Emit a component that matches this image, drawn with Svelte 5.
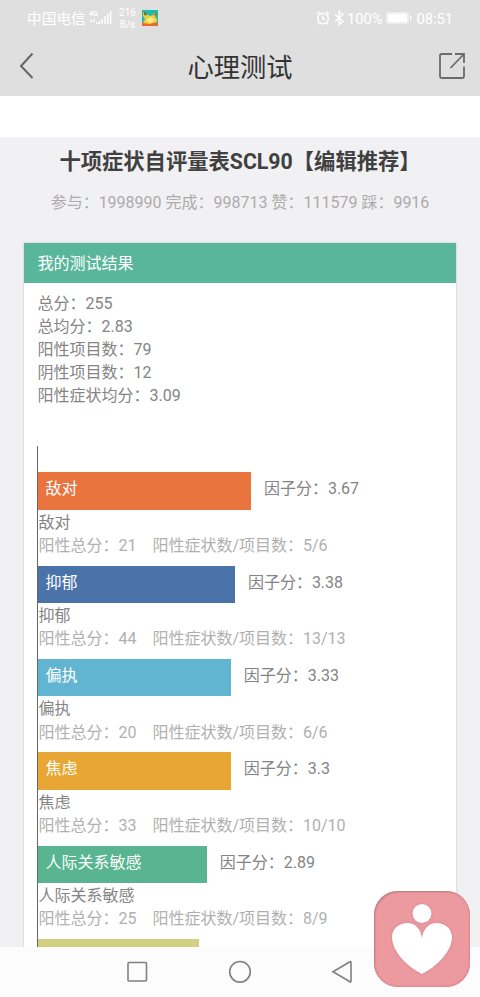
<script lang="ts">
  // Numbers shown under the title
  const stats = [
    { label: "参与", value: 1998990 },
    { label: "完成", value: 998713 },
    { label: "赞", value: 111579 },
    { label: "踩", value: 9916 },
  ];

  // Overall result
  const summary = [
    { label: "总分", value: "255" },
    { label: "总均分", value: "2.83" },
    { label: "阳性项目数", value: "79" },
    { label: "阴性项目数", value: "12" },
    { label: "阳性症状均分", value: "3.09" },
  ];

  // One bar for each factor, width in percent of the chart
  const factors = [
    { name: "敌对", score: "3.67", total: 21, items: "5/6", width: 53, color: "#e9743e" },
    { name: "抑郁", score: "3.38", total: 44, items: "13/13", width: 49, color: "#4a73aa" },
    { name: "偏执", score: "3.33", total: 20, items: "6/6", width: 48, color: "#62b5d1" },
    { name: "焦虑", score: "3.3", total: 33, items: "10/10", width: 48, color: "#e8a735" },
    { name: "人际关系敏感", score: "2.89", total: 25, items: "8/9", width: 42, color: "#58b491" },
  ];

  // The bar that is scrolled halfway under the navigation keys
  const nextBar = { width: 40, color: "#d2d182" };

  const statsLine = stats.map((s) => `${s.label}：${s.value}`).join(" ");
</script>

<div class="phone">
  <header>
    <div class="status">
      <span class="carrier">中国电信</span>
      <svg class="signal" width="23" height="16" viewBox="0 0 23 16" fill="#fff">
        <text x="0" y="6" font-size="7" font-weight="bold">4G</text>
        <path d="M1 11l2-2v4zM4 9.5h2v2H4zM7 12h1.5v2H7zM9.6 11h1.6v3H9.6zM12.4 9H14v5h-1.600zM15.200 6.500h1.600V14h-1.600zM18 4h1.600v10H18zM20.800 1h1.600v13h-1.600z" />
      </svg>
      <span class="speed">216<br />B/s</span>
      <svg class="app" width="16" height="16" viewBox="0 0 16 16">
        <rect width="16" height="16" fill="#20b9ad" />
        <path d="M0 12.500Q8 10 16 13v3H0z" fill="#e56b32" />
        <path d="M1 1l4 3.500 3 1.500 3-1 3-3 1 3-2 2 2 2v3l-7 2-7-1 2-4-2-3z" fill="#f0cf3c" />
        <path d="M1 1l4 3-2 2zM14 2l1 3-3 1z" fill="#6d642b" />
        <path d="M4 10l5-3 4 3-5 3z" fill="#fbe98a" />
      </svg>
      <span class="space"></span>
      <svg width="14" height="16" viewBox="0 0 14 16" fill="none" stroke="#fff" stroke-width="1.4">
        <circle cx="7" cy="8.5" r="5.3" />
        <path d="M7 5.500v3.300l2 1.500M1 4l2.600-2.500M13 4l-2.600-2.500M3 13l-1 1.500M11 13l1 1.500" />
      </svg>
      <svg class="bluetooth" width="10" height="16" viewBox="0 0 10 16" fill="none" stroke="#fff" stroke-width="1.4">
        <path d="M1 4.500l8 7-4 3v-13l4 3-8 7" />
      </svg>
      <span class="percent">100%</span>
      <svg class="battery" width="26" height="12" viewBox="0 0 26 12" fill="#fff">
        <rect x="0.5" y="0.5" width="22" height="11" rx="1.5" fill="none" stroke="#fff" stroke-opacity="0.5" />
        <rect x="1.5" y="1.5" width="20" height="9" />
        <rect x="24" y="3.5" width="1.3" height="5" rx="0.6" />
      </svg>
      <span class="clock">08:51</span>
    </div>

    <div class="navbar">
      <svg width="16" height="28" viewBox="0 0 16 28" fill="none" stroke="#666" stroke-width="2">
        <path d="M13.500 1.500L2 14l11.500 12" />
      </svg>
      <span class="title">心理测试</span>
      <svg width="28" height="28" viewBox="0 0 28 28" fill="none" stroke="#6b6b6b" stroke-width="1.8">
        <path d="M14 2H3.500Q2 2 2 3.500v21Q2 26 3.500 26h21q1.500 0 1.500-1.500V14.500M17 2h9v9M26 2L12.500 16" />
      </svg>
    </div>
  </header>

  <main>
    <h1>十项症状自评量表SCL90【编辑推荐】</h1>
    <p class="stats">{statsLine}</p>

    <section class="card">
      <h2>我的测试结果</h2>
      <div class="summary">
        {#each summary as row}
          <div>{row.label}：{row.value}</div>
        {/each}
      </div>

      <div class="chart">
        {#each factors as factor}
          <div class="factor">
            <div class="bar-row">
              <div class="bar" style="width: {factor.width}%; background: {factor.color}">
                {factor.name}
              </div>
              <span class="score">因子分：{factor.score}</span>
            </div>
            <div class="name">{factor.name}</div>
            <div class="detail">
              <span>阳性总分：{factor.total}</span>
              <span>阳性症状数/项目数：{factor.items}</span>
            </div>
          </div>
        {/each}
        <div class="bar-row">
          <div class="bar" style="width: {nextBar.width}%; background: {nextBar.color}"></div>
        </div>
      </div>
    </section>
  </main>

  <footer>
    <svg width="24" height="24" viewBox="0 0 24 24">
      <rect x="3" y="2.5" width="18.5" height="18.5" rx="1" />
    </svg>
    <svg width="24" height="24" viewBox="0 0 24 24">
      <circle cx="12" cy="11.8" r="10.3" />
    </svg>
    <svg width="24" height="24" viewBox="0 0 24 24">
      <path d="M2 11.800L19 1.800q1-.5 1 .5v19q0 1-1 .5z" />
    </svg>
  </footer>

  <button class="heart" aria-label="heart">
    <svg width="96" height="96" viewBox="0 0 96 96" fill="#fff">
      <circle cx="48" cy="22.5" r="9.5" />
      <path d="M48 47C47 38 41 32 33.500 32C24 32 18 38.500 18 46C18 61 34 76 48 83C62 76 78 61 78 46C78 38.500 72 32 62.500 32C55 32 49 38 48 47z" />
    </svg>
  </button>
</div>

<style>
  :global(body) {
    margin: 0;
  }

  .phone {
    position: relative;
    display: flex;
    flex-direction: column;
    width: 480px;
    height: 997px;
    overflow: hidden;
    background: #fff;
    color: #848484;
    font-family: Roboto, "Noto Sans CJK SC", sans-serif;
    font-size: 16px;
  }

  svg {
    display: block;
    flex: none;
  }

  header {
    flex: none;
    height: 96px;
    margin-bottom: 41px;
    background: #dfdfdf;
  }

  .status {
    display: flex;
    align-items: center;
    height: 36px;
    padding: 0 27px;
    color: #fff;
    font-size: 14.7px;
    line-height: 20px;
    white-space: nowrap;
  }

  .carrier {
    width: 59px;
    margin: 2px 3px 0 0;
  }

  .speed {
    width: 17px;
    margin: 1px 6px 0 7px;
    font-size: 10px;
    line-height: 12px;
    text-align: center;
  }

  .space {
    flex: 1;
  }

  .bluetooth {
    margin: 0 3px 0 4px;
  }

  .percent,
  .clock {
    padding-top: 1px;
  }

  .battery {
    margin: 0 4px;
  }

  .navbar {
    display: flex;
    align-items: center;
    justify-content: space-between;
    height: 60px;
    padding: 0 14px 0 19px;
  }

  .title {
    margin: 4px 0 0 7px;
    color: #333;
    font-size: 26.3px;
    line-height: 40px;
  }

  main {
    flex: 1;
    min-height: 0;
    padding: 0 24px;
    overflow: hidden;
    background: #f1f1f3;
  }

  h1 {
    margin: 10px 0 0;
    color: #404040;
    font-size: 21.3px;
    font-weight: bold;
    line-height: 30px;
    text-align: center;
    white-space: nowrap;
  }

  .stats {
    margin: 14px 0 0;
    color: #aeaaac;
    line-height: 24px;
    text-align: center;
    white-space: nowrap;
  }

  .card {
    margin-top: 28.4px;
    background: #fff;
    box-shadow: 0 0 2px #bbb;
  }

  h2 {
    box-sizing: border-box;
    height: 40px;
    margin: 0;
    padding: 1px 0 0 13.5px;
    background: #5ab69a;
    color: #fff;
    font-size: 16px;
    font-weight: normal;
    line-height: 40px;
  }

  .summary {
    padding: 8.6px 13.5px 0;
    line-height: 23.1px;
  }

  .chart {
    width: 401px;
    margin: 39px 0 0 13.4px;
    padding-top: 26px;
    border-left: 1.5px solid #666;
  }

  .factor {
    height: 93.3px;
  }

  .bar-row {
    display: flex;
    height: 37.3px;
    line-height: 33px;
  }

  .bar {
    box-sizing: border-box;
    padding-left: 7px;
    color: #fff;
    white-space: nowrap;
  }

  .score {
    margin-left: 13px;
  }

  .name,
  .detail {
    line-height: 23.2px;
  }

  .name {
    margin-top: 1px;
  }

  .detail {
    display: flex;
    gap: 16px;
    color: #b0b0b0;
  }

  footer {
    display: flex;
    flex: none;
    justify-content: center;
    gap: 79px;
    height: 37px;
    padding-top: 13px;
    background: #fcfcfc;
  }

  footer svg {
    fill: none;
    stroke: #808080;
    stroke-width: 1.6;
  }

  .heart {
    position: absolute;
    right: 10px;
    bottom: 10px;
    width: 96px;
    height: 96px;
    padding: 0;
    border: 0;
    border-radius: 24px;
    background: #ec999f;
    box-shadow: inset 1px 1px 2px #b87a80, inset -1px -1px 2px #dc8b92;
  }

  .heart svg {
    filter: drop-shadow(0.5px 0.5px 1px #c97f86);
  }
</style>
